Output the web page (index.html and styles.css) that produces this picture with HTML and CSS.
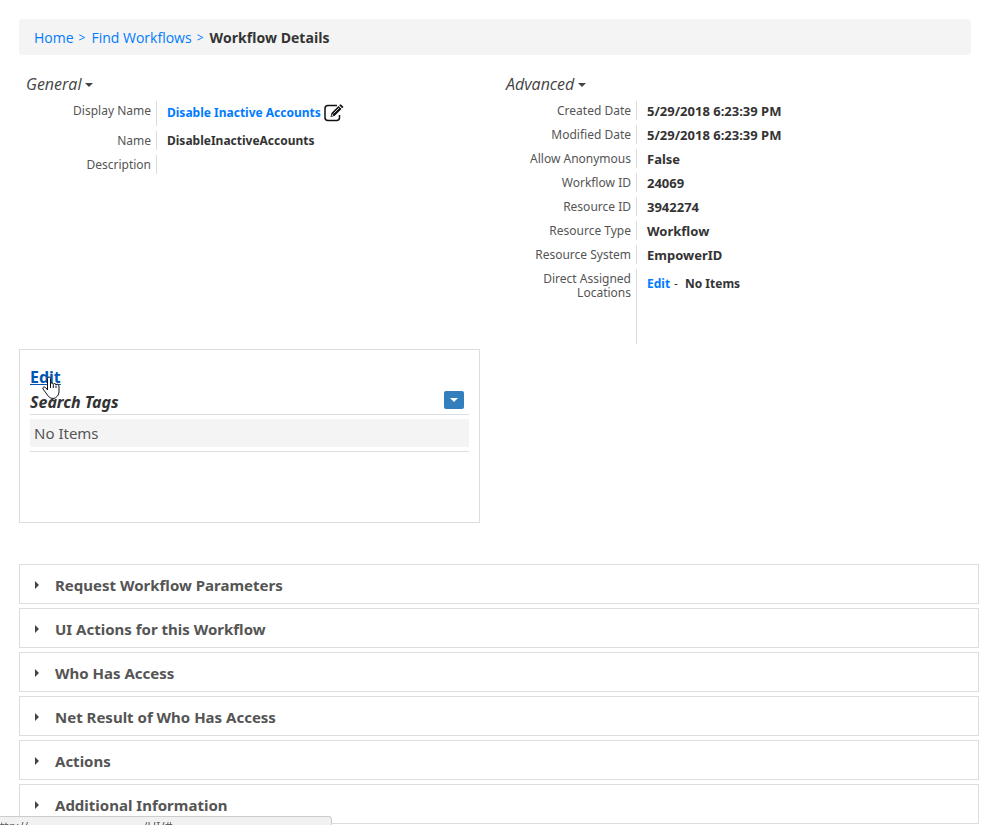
FILE: index.html
```html
<!DOCTYPE html>
<html lang="en">
<head>
<meta charset="utf-8">
<title>Workflow Details</title>
<link rel="stylesheet" href="styles.css">
</head>
<body>
<main class="page">
  <nav class="breadcrumb" aria-label="Breadcrumb">
    <a href="#">Home</a><span class="sep">&gt;</span><a href="#">Find Workflows</a><span class="sep">&gt;</span><strong>Workflow Details</strong>
  </nav>

  <div class="columns">
    <section class="details">
      <button class="section-title" type="button">General <span class="caret"></span></button>
      <dl class="fields fields-compact">
        <div class="field field-tall"><dt>Display Name</dt><dd><a href="#">Disable Inactive Accounts</a><button class="icon-button" type="button" aria-label="Edit display name"><svg width="20" height="18" viewBox="0 0 20 18"><path d="M13 1.500H4Q1 1.500 1 4.500v9q0 3 3 3h8.500q3 0 3-3V11" fill="none" stroke="#111" stroke-width="1.500"/><path d="M6.500 13l1-4 7-7 3 3-7 7z" fill="#111"/><path d="M15.200 1.300l1-1q1 0 3.300 2.700l-1.300 1.300z" fill="#111"/><path d="M9.500 9.500l5.500-5.500" stroke="#fff" stroke-width=".8"/><path d="M8 10l1.500 1.500-1.800.5z" fill="#fff"/></svg></button></dd></div>
        <div class="field"><dt>Name</dt><dd>DisableInactiveAccounts</dd></div>
        <div class="field"><dt>Description</dt><dd></dd></div>
      </dl>
    </section>
    <section class="details">
      <button class="section-title" type="button">Advanced <span class="caret"></span></button>
      <dl class="fields">
        <div class="field"><dt>Created Date</dt><dd>5/29/2018 6:23:39 PM</dd></div>
        <div class="field"><dt>Modified Date</dt><dd>5/29/2018 6:23:39 PM</dd></div>
        <div class="field"><dt>Allow Anonymous</dt><dd>False</dd></div>
        <div class="field"><dt>Workflow ID</dt><dd>24069</dd></div>
        <div class="field"><dt>Resource ID</dt><dd>3942274</dd></div>
        <div class="field"><dt>Resource Type</dt><dd>Workflow</dd></div>
        <div class="field"><dt>Resource System</dt><dd>EmpowerID</dd></div>
        <div class="field field-locations"><dt>Direct Assigned Locations</dt><dd><a href="#">Edit</a><span class="dash">-</span><span>No Items</span></dd></div>
      </dl>
    </section>
  </div>

  <section class="tags">
    <div class="tags-edit"><a href="#">Edit</a>
      <svg class="pointer" width="18" height="24" viewBox="0 0 18 24"><path d="M5.500 14V2.500Q5.500 1 7 1t1.500 1.500V8q0-1 1.300-1t1.500 1.500q.2-1 1.400-1T14 9q.2-.8 1.300-.8T17 10v6q0 2-1.500 4-2 2.500-4.500 2.500T6.500 20.500L4 17l-3-4q-.7-1.500.8-2 1-.2 2 .8z" fill="#fff" stroke="#112" stroke-width="1"/><path d="M8.500 8v4M11.300 9v3M14 9.500V12" stroke="#112"/></svg>
    </div>
    <header class="tags-head"><h2>Search Tags</h2><button class="menu-button" type="button" aria-label="Search tag options"><span class="caret caret-light"></span></button></header>
    <div class="tags-list"><p>No Items</p></div>
  </section>

  <div class="panels">
    <button class="panel" type="button"><span class="arrow"></span>Request Workflow Parameters</button>
    <button class="panel" type="button"><span class="arrow"></span>UI Actions for this Workflow</button>
    <button class="panel" type="button"><span class="arrow"></span>Who Has Access</button>
    <button class="panel" type="button"><span class="arrow"></span>Net Result of Who Has Access</button>
    <button class="panel" type="button"><span class="arrow"></span>Actions</button>
    <button class="panel" type="button"><span class="arrow"></span>Additional Information</button>
  </div>
</main>
<div class="status"><span class="status-scheme">ttp://</span><span>/UI/#</span></div>
</body>
</html>
```
FILE: styles.css
```css
* { box-sizing: border-box; }
body { margin: 0; background: #fff; color: #333; font: 13px/18px "Noto Sans", "Open Sans", sans-serif; }
a { color: #007bff; text-decoration: none; }
button { font: inherit; color: inherit; border: 0; background: none; padding: 0; text-align: left; }
h2, p, dl, dd { margin: 0; }

.page { padding: 19px 16px 0 19px; }
.breadcrumb { display: flex; align-items: center; height: 36px; margin-right: 8px; padding: 2px 15px 0; background: #f4f4f4; border-radius: 4px; font-family: "Open Sans", "Noto Sans", sans-serif; font-size: 14px; }
.sep { margin: 0 6px 0 5px; color: #007bff; font-size: 12px; }

.columns { display: grid; grid-template-columns: 1fr 1fr; margin-top: 18px; }
.details { padding-left: 7px; }
.section-title { display: flex; align-items: center; gap: 4px; height: 22px; font-size: 16px; font-style: italic; font-family: "Open Sans", "Noto Sans", sans-serif; color: #444; }
.caret { width: 0; height: 0; margin-top: 2px; border: 4px solid transparent; border-top-color: #444; border-bottom: 0; }
.caret-light { border-top-color: #fff; margin: 0; }
.fields { display: grid; gap: 5px; margin-top: 6px; }
.field { display: grid; grid-template-columns: 131px 1fr; min-height: 19px; }
.field-tall { min-height: 25px; }
.field dt { padding: 3px 5px 0 0; border-right: 1px solid #ddd; text-align: right; font-size: 12px; line-height: 14px; color: #555; }
.field dd { display: flex; align-items: flex-start; padding: 1px 0 0 10px; font-weight: 700; }
.fields-compact dd, .field-locations dd { font-size: 12px; }
.field-tall dd { padding-top: 3px; }
.icon-button { display: flex; margin-left: 3px; }
.field-locations { min-height: 75px; }
.field-locations dt { padding-left: 24px; }
.field-locations dd { padding-top: 6px; }
.dash { margin: 0 7px 0 4px; font-weight: 400; }

.tags { width: 48%; min-height: 174px; margin-top: 5px; padding: 16px 10px; border: 1px solid #ddd; }
.tags-edit { position: relative; width: max-content; font-size: 16px; font-weight: 700; line-height: 23px; }
.tags-edit a { color: #0056b3; text-decoration: underline; }
.pointer { position: absolute; left: 12px; top: 10px; }
.tags-head { display: flex; align-items: center; justify-content: space-between; height: 26px; padding-right: 5px; border-bottom: 1px solid #ddd; }
.tags-head h2 { font-size: 16px; font-style: italic; line-height: 22px; }
.menu-button { display: flex; align-items: center; justify-content: center; width: 20px; height: 18px; margin-bottom: 4px; background: #337ebd; border-radius: 2px; }
.tags-list { padding: 4px 0; border-bottom: 1px solid #ddd; }
.tags-list p { padding: 0 4px; background: #f4f4f4; color: #555; font-size: 15px; line-height: 28px; }

.panels { display: grid; gap: 4px; margin-top: 41px; }
.panel { display: flex; align-items: center; height: 40px; padding: 2px 15px 0; border: 1px solid #ddd; font-size: 15px; font-weight: 700; color: #555; }
.arrow { width: 4px; height: 8px; margin: 0 16px 0 0; border: 4px solid transparent; border-left-color: #444; border-right: 0; }
.status { position: fixed; left: 0; bottom: 0; display: flex; width: 332px; height: 9px; overflow: hidden; border: 1px solid #ccc; border-width: 1px 1px 0 0; border-radius: 0 4px 0 0; background: #f1f1f1; color: #666; font-size: 12px; line-height: 20px; }
.status-scheme { width: 143px; }
```
